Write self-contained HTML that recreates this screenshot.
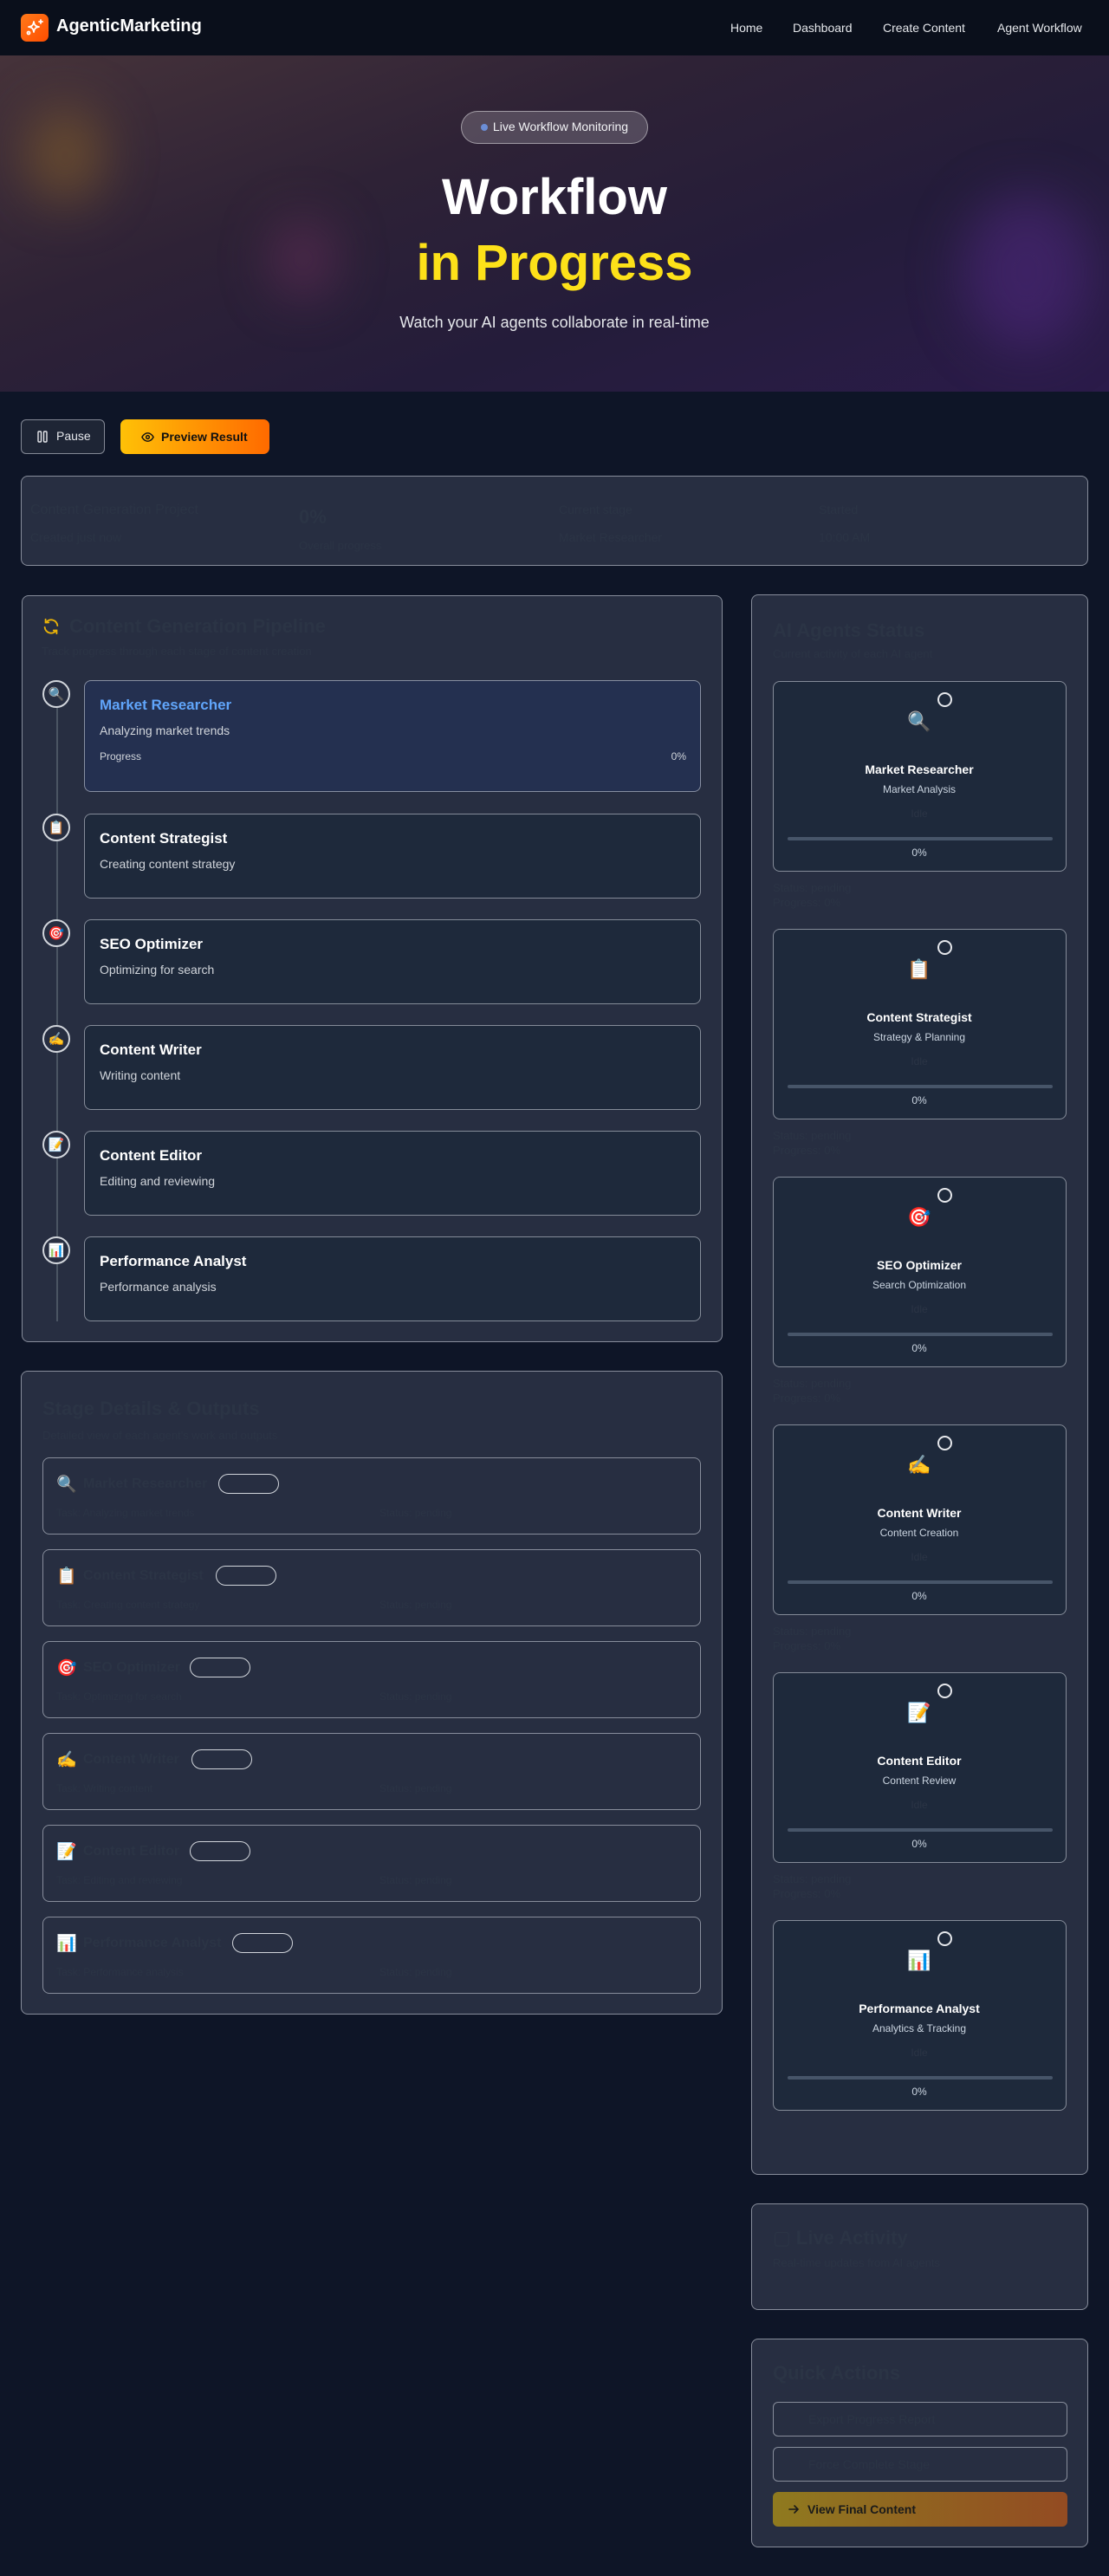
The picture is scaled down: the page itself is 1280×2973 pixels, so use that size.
<!DOCTYPE html>
<html><head><meta charset="utf-8"><style>
*{box-sizing:border-box;margin:0;padding:0}
body{width:1280px;height:2973px;background:#0e1527;font-family:"Liberation Sans","DejaVu Sans",sans-serif;color:#fff;position:relative;overflow:hidden}
.a{position:absolute}
.nav{left:0;top:0;width:1280px;height:64px;background:#0a0f1b}
.hero{left:0;top:64px;width:1280px;height:388px;background:linear-gradient(160deg,#46333a 0%,#2e2236 35%,#241c3a 65%,#2b1b4a 100%);overflow:hidden}
.blob{position:absolute;border-radius:50%;filter:blur(30px)}
.panel{background:#272e41;border:1.5px solid rgba(200,205,215,.6);border-radius:8px}
.card{background:#1e293b;border:1.5px solid rgba(200,205,215,.6);border-radius:8px}
.faint{color:#2b3445}
.emo{font-family:"Noto Color Emoji","DejaVu Sans",sans-serif}
</style></head><body>
<div class="a nav">
 <div class="a" style="left:24px;top:16px;width:32px;height:32px;border-radius:7px;background:linear-gradient(135deg,#ff7a1a,#ff4d00)">
  <svg width="32" height="32" viewBox="0 0 32 32" fill="none" stroke="#fff" stroke-width="1.8" stroke-linecap="round" stroke-linejoin="round"><path d="M15 9c.6 4 2 5.5 6 6-4 .6-5.4 2-6 6-.6-4-2-5.4-6-6 4-.5 5.4-2 6-6z"/><path d="M23 7v4M21 9h4"/><circle cx="9" cy="22" r="1.5"/></svg>
 </div>
 <div class="a" style="left:65px;top:19px;font-size:20px;font-weight:bold">AgenticMarketing</div>
 <div class="a" style="left:843px;top:24px;font-size:14px;color:#e5e7eb">Home</div>
 <div class="a" style="left:915px;top:24px;font-size:14px;color:#e5e7eb">Dashboard</div>
 <div class="a" style="left:1019px;top:24px;font-size:14px;color:#e5e7eb">Create Content</div>
 <div class="a" style="left:1151px;top:24px;font-size:14px;color:#e5e7eb">Agent Workflow</div>
</div>
<div class="a hero">
 <div class="blob" style="left:30px;top:60px;width:90px;height:110px;background:rgba(140,100,40,.55)"></div>
 <div class="blob" style="left:315px;top:190px;width:70px;height:90px;background:rgba(120,50,100,.5)"></div>
 <div class="blob" style="left:1110px;top:160px;width:150px;height:180px;background:rgba(80,40,130,.55)"></div>
 <div class="a" style="left:532px;top:64px;width:216px;height:38px;border-radius:19px;background:rgba(255,255,255,.18);border:1.5px solid rgba(255,255,255,.45);font-size:14px;color:#f3f4f6;text-align:center;line-height:35px"><span style="display:inline-block;width:8px;height:8px;border-radius:50%;background:#6b8ed6;margin-right:6px;vertical-align:0"></span>Live Workflow Monitoring</div>
 <div class="a" style="left:0;width:1280px;top:128px;text-align:center;font-size:58px;font-weight:bold;line-height:72px">Workflow</div>
 <div class="a" style="left:0;width:1280px;top:204px;text-align:center;font-size:58px;font-weight:bold;line-height:72px;color:#fde119">in Progress</div>
 <div class="a" style="left:0;width:1280px;top:298px;text-align:center;font-size:18px;color:#e5e7eb">Watch your AI agents collaborate in real-time</div>
</div>
<div class="a" style="left:24px;top:484px;width:97px;height:40px;border:1.5px solid rgba(200,205,215,.6);border-radius:6px;background:#1e2535;font-size:14px;line-height:37px;padding-left:40px;color:#e5e7eb">Pause
 <svg class="a" style="left:17px;top:12px" width="14" height="14" viewBox="0 0 14 14" fill="none" stroke="#e5e7eb" stroke-width="1.4"><rect x="2" y="1" width="3.5" height="12" rx="1"/><rect x="8.5" y="1" width="3.5" height="12" rx="1"/></svg></div>
<div class="a" style="left:139px;top:484px;width:172px;height:40px;border-radius:7px;background:linear-gradient(90deg,#ffc107,#ff6a00);font-size:14px;font-weight:bold;line-height:40px;padding-left:47px;color:#111">Preview Result
 <svg class="a" style="left:24px;top:13px" width="15" height="15" viewBox="0 0 16 16" fill="none" stroke="#111" stroke-width="1.5"><path d="M1 8s2.5-5 7-5 7 5 7 5-2.5 5-7 5-7-5-7-5z"/><circle cx="8" cy="8" r="2"/></svg></div>
<div class="a panel" style="left:24px;top:549px;width:1232px;height:104px">
 <div class="a faint" style="left:10px;top:30px;font-size:16px">Content Generation Project</div>
 <div class="a faint" style="left:10px;top:62px;font-size:14px">Created just now</div>
 <div class="a faint" style="left:320px;top:34px;font-size:22px;font-weight:bold">0%</div>
 <div class="a faint" style="left:320px;top:72px;font-size:13px">Overall progress</div>
 <div class="a faint" style="left:620px;top:30px;font-size:14px">Current stage</div>
 <div class="a faint" style="left:620px;top:62px;font-size:14px">Market Researcher</div>
 <div class="a faint" style="left:920px;top:30px;font-size:14px">Started</div>
 <div class="a faint" style="left:920px;top:62px;font-size:14px">10:00 AM</div>
</div>

<div class="a panel" style="left:25px;top:687px;width:809px;height:862px">
 <svg class="a" style="left:22px;top:24px" width="22" height="22" viewBox="0 0 24 24" fill="none" stroke="#eab308" stroke-width="2" stroke-linecap="round"><path d="M20 11a8 8 0 0 0-14.5-4M4 13a8 8 0 0 0 14.5 4"/><path d="M5 3v4h4M19 21v-4h-4"/></svg>
 <div class="a faint" style="left:54px;top:22px;font-size:22px;font-weight:bold">Content Generation Pipeline</div>
 <div class="a faint" style="left:22px;top:56px;font-size:13px">Track progress through each stage of content creation</div>
 <div class="a" style="left:39px;top:112px;width:2px;height:725px;background:#4b5563"></div>
</div>

<div class="a panel" style="left:24px;top:1582px;width:810px;height:743px">
 <div class="a faint" style="left:24px;top:30px;font-size:22px;font-weight:bold">Stage Details &amp; Outputs</div>
 <div class="a faint" style="left:24px;top:66px;font-size:13px">Detailed view of each agent's work and outputs</div>
</div>

<div class="a panel" style="left:867px;top:686px;width:389px;height:1824px">
 <div class="a faint" style="left:24px;top:28px;font-size:22px;font-weight:bold">AI Agents Status</div>
 <div class="a faint" style="left:24px;top:60px;font-size:13px">Current activity of each AI agent</div>
</div>

<div class="a panel" style="left:867px;top:2543px;width:389px;height:123px">
 <div class="a faint" style="left:24px;top:26px;font-size:22px;font-weight:bold">▢ Live Activity</div>
 <div class="a faint" style="left:24px;top:60px;font-size:13px">Real-time updates from AI agents</div>
</div>
<div class="a panel" style="left:867px;top:2699px;width:389px;height:241px">
 <div class="a faint" style="left:24px;top:26px;font-size:22px;font-weight:bold">Quick Actions</div>
 <div class="a" style="left:24px;top:72px;width:340px;height:40px;border:1.5px solid rgba(200,205,215,.6);border-radius:6px"><span class="a faint" style="left:40px;top:11px;font-size:14px">Export Progress Report</span></div>
 <div class="a" style="left:24px;top:124px;width:340px;height:40px;border:1.5px solid rgba(200,205,215,.6);border-radius:6px"><span class="a faint" style="left:40px;top:11px;font-size:14px">Force Complete Stage</span></div>
 <div class="a" style="left:24px;top:176px;width:340px;height:40px;border-radius:6px;background:linear-gradient(90deg,#8f7a1f,#934b22);font-size:14px;font-weight:bold;color:#1a1a1a;line-height:40px;padding-left:40px">View Final Content
  <svg class="a" style="left:17px;top:13px" width="14" height="14" viewBox="0 0 14 14" fill="none" stroke="#1a1a1a" stroke-width="1.6" stroke-linecap="round"><path d="M2 7h10M8 3l4 4-4 4"/></svg></div>
</div>
<div id="pipe"></div>

<script>
(function(){
var names=["Market Researcher","Content Strategist","SEO Optimizer","Content Writer","Content Editor","Performance Analyst"];
var emo=["🔍","📋","🎯","✍️","📝","📊"];
var subs=["Analyzing market trends","Creating content strategy","Optimizing for search","Writing content","Editing and reviewing","Performance analysis"];
var roles=["Market Analysis","Strategy & Planning","Search Optimization","Content Creation","Content Review","Analytics & Tracking"];
var pills=[251,248,218,220,218,267];
var h="";
for(var i=0;i<6;i++){
 var ty=i==0?785:939+(i-1)*122, ht=i==0?129:98;
 h+='<div class="a" style="left:49px;top:'+ty+'px;width:32px;height:32px;border-radius:50%;border:2px solid #d1d5db;background:#272e41;text-align:center;line-height:28px;font-size:15px"><span class="emo">'+emo[i]+'</span></div>';
 h+='<div class="a card" style="left:97px;top:'+ty+'px;width:712px;height:'+ht+'px;'+(i==0?'background:#243050;':'')+'"><div class="a" style="left:17px;top:18px;font-size:17px;font-weight:bold;color:'+(i==0?'#60a5fa':'#fff')+'">'+names[i]+'</div><div class="a" style="left:17px;top:49px;font-size:14px;color:#d1d5db">'+subs[i]+'</div>'+(i==0?'<div class="a" style="left:17px;top:80px;font-size:12px;color:#d1d5db">Progress</div><div class="a" style="right:16px;top:80px;font-size:12px;color:#d1d5db">0%</div>':'')+'</div>';
 var st=1682+i*106;
 h+='<div class="a card" style="left:49px;top:'+st+'px;width:760px;height:89px;background:#272e41"><span class="a emo" style="left:15px;top:18px;font-size:19px">'+emo[i]+'</span><span class="a faint" style="left:46px;top:21px;font-size:16px;font-weight:bold">'+names[i]+'</span><span class="a" style="left:'+(pills[i]-49)+'px;top:18px;width:70px;height:23px;border:1.5px solid #d1d5db;border-radius:12px"></span><span class="a faint" style="left:15px;top:56px;font-size:12px">Task: '+subs[i]+'</span><span class="a faint" style="left:388px;top:56px;font-size:12px">Status: pending</span></div>';
 var at=786+i*286;
 h+='<div class="a card" style="left:892px;top:'+at+'px;width:339px;height:220px"><div class="a" style="left:189px;top:12px;width:17px;height:17px;border-radius:50%;border:2px solid #e5e7eb"></div><div class="a emo" style="left:0;width:336px;top:34px;text-align:center;font-size:22px">'+emo[i]+'</div><div class="a" style="left:0;width:336px;top:93px;text-align:center;font-size:14px;font-weight:bold">'+names[i]+'</div><div class="a" style="left:0;width:336px;top:117px;text-align:center;font-size:12px;color:#cbd5e1">'+roles[i]+'</div><div class="a faint" style="left:0;width:336px;top:145px;text-align:center;font-size:12px">Idle</div><div class="a" style="left:16px;top:179px;width:306px;height:4px;border-radius:2px;background:#475569"></div><div class="a" style="left:0;width:336px;top:190px;text-align:center;font-size:12px;color:#cbd5e1">0%</div></div>';
 if(i<5)h+='<div class="a faint" style="left:892px;top:'+(at+230)+'px;font-size:13px;line-height:17px">Status: pending<br>Progress: 0%</div>';
}
document.getElementById("pipe").outerHTML=h;
})();
</script>
</body></html>
